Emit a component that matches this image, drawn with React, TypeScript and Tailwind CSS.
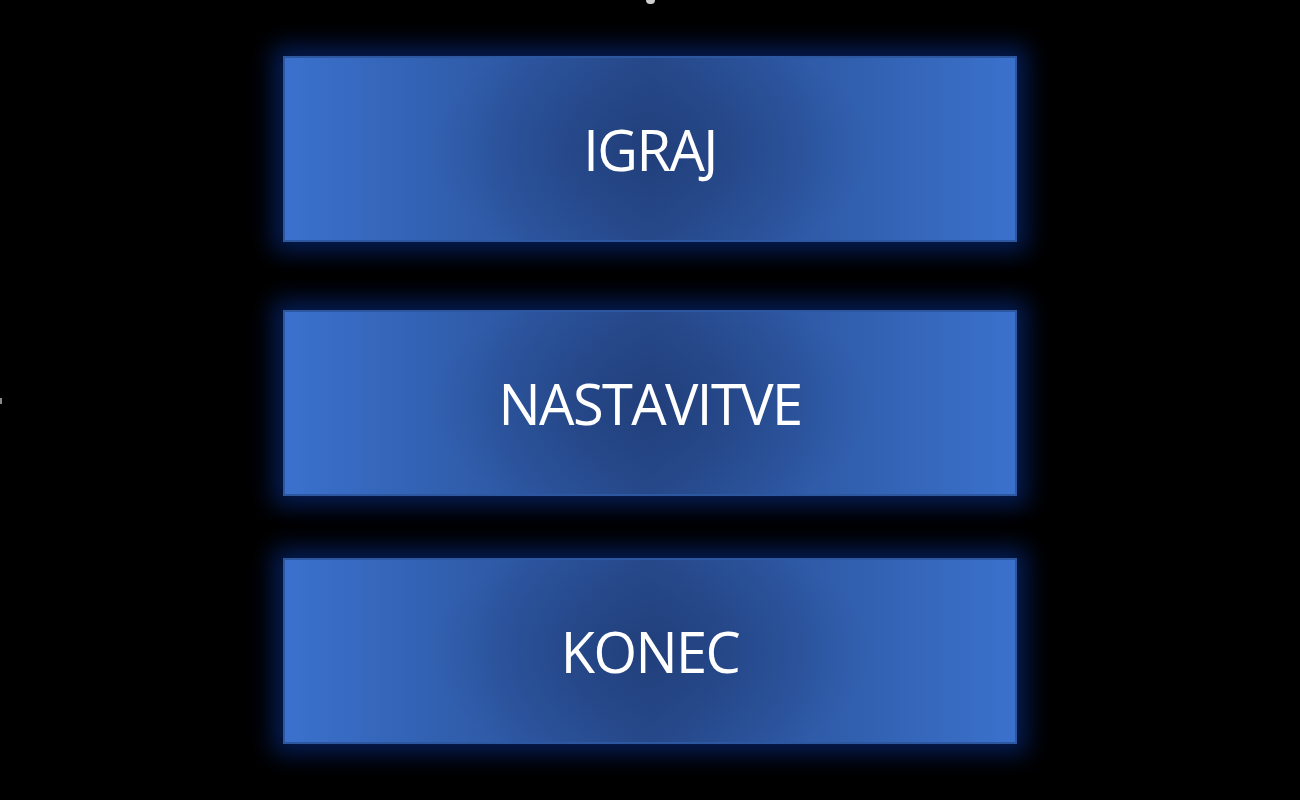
import React from "react";

const Btn = ({ label, className = "" }: { label: string; className?: string }) => (
  <button
    className={
      "w-[734px] h-[186px] border-2 border-[#2d579f] flex items-center justify-center text-white text-[56px] tracking-[-1.6px] shadow-[0_0_22px_10px_rgba(5,30,90,0.95)] bg-[radial-gradient(ellipse_30%_70%_at_50%_50%,rgba(28,52,105,0.55)_0%,rgba(28,52,105,0)_100%),linear-gradient(90deg,#3b71cd_0%,#3465b8_15%,#2d57a2_33%,#284c90_50%,#2d57a2_67%,#3465b8_85%,#3b71cd_100%)] " +
      className
    }
    style={{ fontFamily: '"Open Sans", "Noto Sans", sans-serif' }}
  >
    <span className="leading-none">{label}</span>
  </button>
);

export default function App() {
  return (
    <div className="relative w-[1300px] h-[800px] bg-black overflow-hidden flex flex-col items-center">
      <div className="absolute left-[646px] top-[-4px] w-[9px] h-[8px] rounded-full bg-[#cfcfcf]" />
      <div className="absolute left-0 top-[398px] w-[2px] h-[6px] bg-[#8a8a8a]" />
      <Btn label="IGRAJ" className="mt-[56px]" />
      <Btn label="NASTAVITVE" className="mt-[68px]" />
      <Btn label="KONEC" className="mt-[62px]" />
    </div>
  );
}
